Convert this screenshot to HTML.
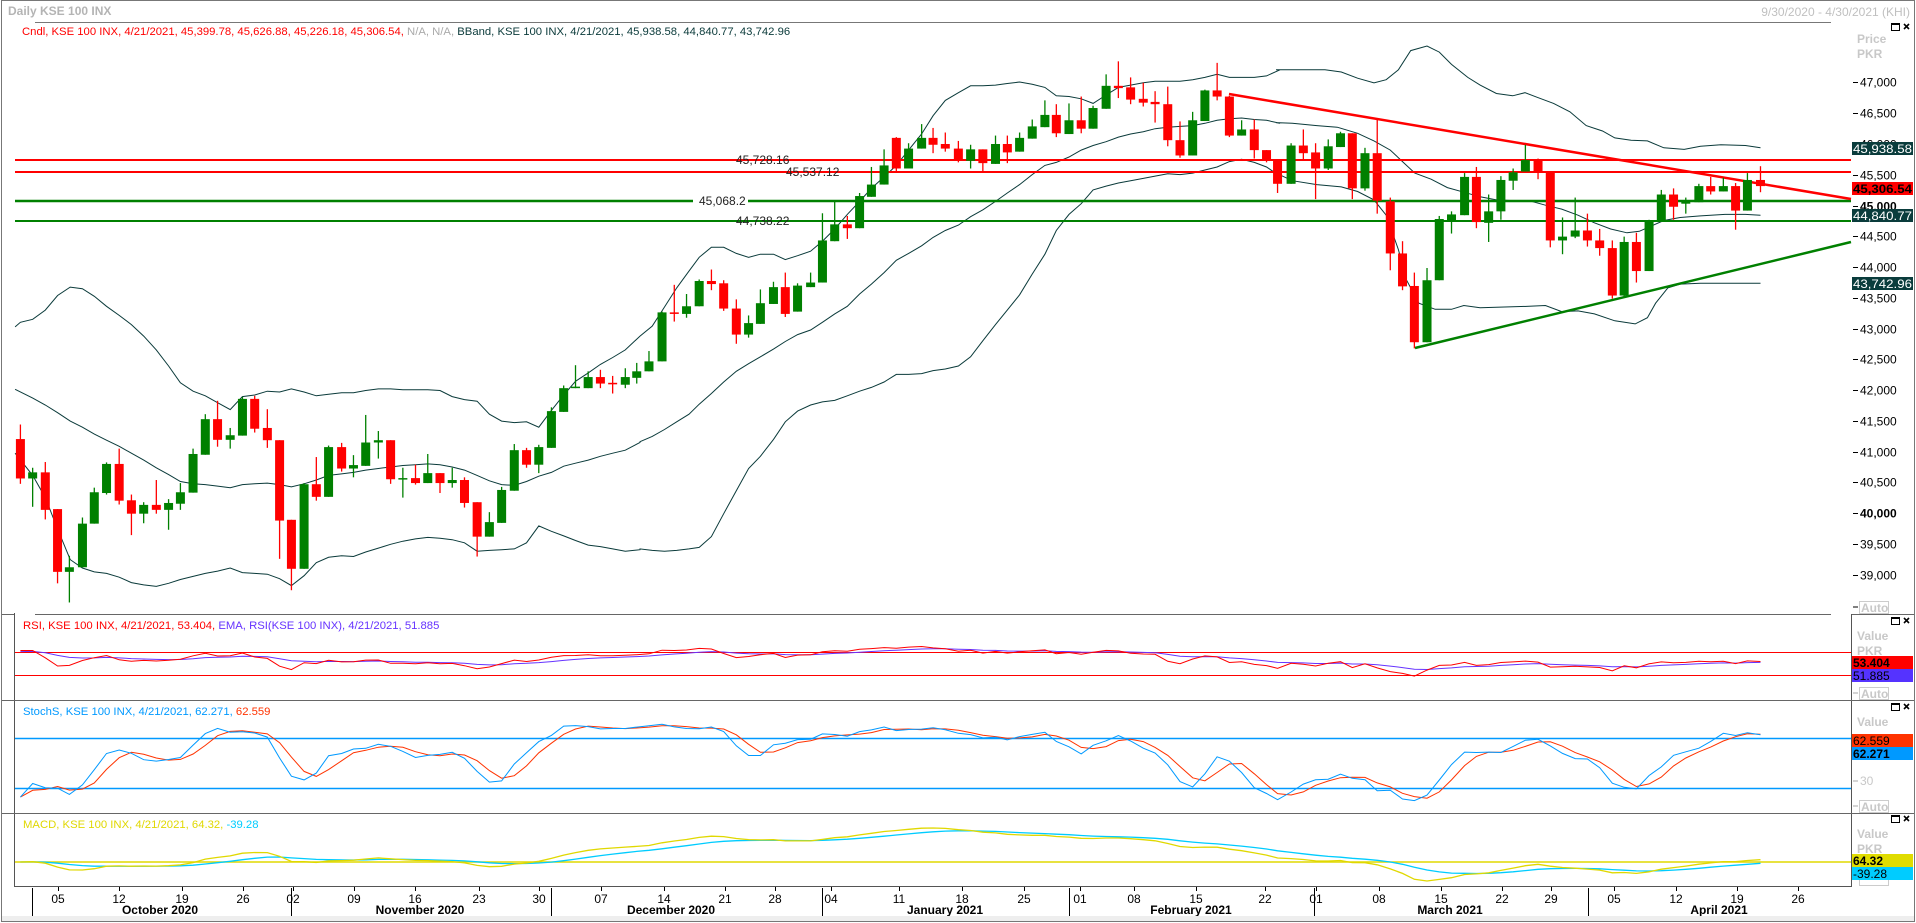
<!DOCTYPE html>
<html><head><meta charset="utf-8">
<style>
html,body{margin:0;padding:0;background:#fff;}
body{width:1916px;height:923px;overflow:hidden;position:relative;font-family:"Liberation Sans",Arial,sans-serif;}
svg{position:absolute;left:0;top:0;}
svg text{font-family:"Liberation Sans",Arial,sans-serif;font-size:12px;}
svg text.lg{font-size:11.3px;}
</style></head>
<body>
<svg id="s" width="1916" height="923" xmlns="http://www.w3.org/2000/svg">
<rect x="1.5" y="0.5" width="1913" height="921" fill="none" stroke="#777" stroke-width="1"/>
<line x1="35" y1="22.5" x2="1831" y2="22.5" stroke="#777"/>
<text x="8" y="15" fill="#b4b4b4" font-weight="bold">Daily KSE 100 INX</text>
<text x="1910" y="16" fill="#c0c0c0" text-anchor="end">9/30/2020 - 4/30/2021 (KHI)</text>
<text class="lg" x="22" y="35" fill="#ff0000">Cndl, KSE 100 INX, 4/21/2021, 45,399.78, 45,626.88, 45,226.18, 45,306.54, <tspan fill="#aaaaaa">N/A, N/A,</tspan> <tspan fill="#0a3a3a">BBand, KSE 100 INX, 4/21/2021, 45,938.58, 44,840.77, 43,742.96</tspan></text>
<g id="bands" fill="none" stroke="#0a3a3a" stroke-width="1"></g>
<g id="hlines">
<line x1="15" y1="160" x2="1851" y2="160" stroke="#ff0000" stroke-width="2"/>
<line x1="15" y1="172" x2="1851" y2="172" stroke="#ff0000" stroke-width="2"/>
<line x1="15" y1="201" x2="1851" y2="201" stroke="#008000" stroke-width="2.5"/>
<line x1="15" y1="221" x2="1851" y2="221" stroke="#008000" stroke-width="2"/>
<line x1="1229" y1="94" x2="1851" y2="199" stroke="#ff0000" stroke-width="2.5"/>
<line x1="1415" y1="348" x2="1851" y2="242" stroke="#008000" stroke-width="2.5"/>
</g>
<rect x="693" y="195" width="55" height="12" fill="#fff"/>
<g id="candles"></g>
<text x="736" y="164" fill="#222">45,728.16</text>
<text x="786" y="176" fill="#222">45,537.12</text>
<text x="699" y="205" fill="#222">45,068.2</text>
<text x="736" y="225" fill="#222">44,738.22</text>

<text x="1857" y="43" fill="#c8c8c8" font-weight="bold">Price</text>
<text x="1857" y="58" fill="#c8c8c8" font-weight="bold">PKR</text>
<g id="yaxis"></g>
<rect x="1852" y="142" width="61" height="13" fill="#0a3c3c"/>
<text x="1853" y="153" fill="#fff" font-size="13" textLength="59" lengthAdjust="spacingAndGlyphs">45,938.58</text>
<rect x="1852" y="182" width="61" height="13" fill="#ff0000"/>
<text x="1853" y="193" fill="#000" font-weight="bold" font-size="13" textLength="59" lengthAdjust="spacingAndGlyphs">45,306.54</text>
<rect x="1852" y="209" width="61" height="13" fill="#0a3c3c"/>
<text x="1853" y="220" fill="#fff" font-size="13" textLength="59" lengthAdjust="spacingAndGlyphs">44,840.77</text>
<rect x="1852" y="277" width="61" height="13" fill="#0a3c3c"/>
<text x="1853" y="288" fill="#fff" font-size="13" textLength="59" lengthAdjust="spacingAndGlyphs">43,742.96</text>
<line x1="1853" y1="607" x2="1858" y2="607" stroke="#000"/>
<rect x="1859.5" y="601.5" width="29" height="12" fill="none" stroke="#ccc"/>
<text x="1861" y="612" fill="#c8c8c8" font-weight="bold">Auto</text>

<line x1="35" y1="614.5" x2="1831" y2="614.5" stroke="#666"/>
<line x1="1851" y1="614.5" x2="1914" y2="614.5" stroke="#666"/>
<line x1="2" y1="614.5" x2="14" y2="614.5" stroke="#666"/>
<line x1="14.5" y1="613" x2="14.5" y2="886" stroke="#555"/>
<line x1="1851.5" y1="614" x2="1851.5" y2="886" stroke="#555"/>
<line x1="2" y1="700.5" x2="1914" y2="700.5" stroke="#666"/>
<line x1="2" y1="813.5" x2="1914" y2="813.5" stroke="#666"/>
<line x1="14" y1="886.5" x2="1852" y2="886.5" stroke="#555"/>

<text class="lg" x="23" y="629" fill="#ff0000">RSI, KSE 100 INX, 4/21/2021, 53.404, <tspan fill="#6633ff">EMA, RSI(KSE 100 INX), 4/21/2021, 51.885</tspan></text>
<line x1="15" y1="652.5" x2="1851" y2="652.5" stroke="#ff0000" stroke-width="1"/>
<line x1="15" y1="675.5" x2="1851" y2="675.5" stroke="#ff0000" stroke-width="1"/>
<g id="rsi" fill="none" stroke-width="1"></g>
<text x="1857" y="640" fill="#c8c8c8" font-weight="bold">Value</text>
<text x="1857" y="655" fill="#c8c8c8" font-weight="bold">PKR</text>
<rect x="1852" y="656" width="61" height="13" fill="#ff0000"/>
<text x="1853" y="667" fill="#000" font-weight="bold" font-size="13">53.404</text>
<rect x="1852" y="669" width="61" height="13" fill="#5533ff"/>
<text x="1853" y="680" fill="#000" font-size="13">51.885</text>
<line x1="1853" y1="693" x2="1858" y2="693" stroke="#aaa"/>
<rect x="1859.5" y="687.5" width="29" height="12" fill="none" stroke="#ccc"/>
<text x="1861" y="698" fill="#c8c8c8" font-weight="bold">Auto</text>

<text class="lg" x="23" y="715" fill="#0099ff">StochS, KSE 100 INX, 4/21/2021, 62.271, <tspan fill="#ff3300">62.559</tspan></text>
<line x1="15" y1="738.5" x2="1851" y2="738.5" stroke="#0099ff" stroke-width="1.5"/>
<line x1="15" y1="788.5" x2="1851" y2="788.5" stroke="#0099ff" stroke-width="1.5"/>
<g id="stoch" fill="none" stroke-width="1"></g>
<text x="1857" y="726" fill="#c8c8c8" font-weight="bold">Value</text>
<rect x="1852" y="734" width="61" height="13" fill="#ff3300"/>
<text x="1853" y="745" fill="#000" font-size="13">62.559</text>
<rect x="1852" y="747" width="61" height="13" fill="#0099ff"/>
<text x="1853" y="758" fill="#000" font-weight="bold" font-size="13">62.271</text>
<line x1="1853" y1="781" x2="1858" y2="781" stroke="#aaa"/>
<text x="1860" y="785" fill="#c8c8c8">30</text>
<line x1="1853" y1="806" x2="1858" y2="806" stroke="#aaa"/>
<rect x="1859.5" y="800.5" width="29" height="12" fill="none" stroke="#ccc"/>
<text x="1861" y="811" fill="#c8c8c8" font-weight="bold">Auto</text>

<text class="lg" x="23" y="828" fill="#e0d800">MACD, KSE 100 INX, 4/21/2021, 64.32, <tspan fill="#00ccff">-39.28</tspan></text>
<line x1="15" y1="862" x2="1851" y2="862" stroke="#e0d800" stroke-width="1.5"/>
<g id="macd" fill="none" stroke-width="1.3"></g>
<text x="1857" y="838" fill="#c8c8c8" font-weight="bold">Value</text>
<text x="1857" y="853" fill="#c8c8c8" font-weight="bold">PKR</text>
<rect x="1859.5" y="873.5" width="29" height="12" fill="none" stroke="#ccc"/>
<rect x="1852" y="854" width="61" height="13" fill="#e0dc00"/>
<text x="1853" y="865" fill="#000" font-weight="bold" font-size="13">64.32</text>
<rect x="1852" y="867" width="61" height="13" fill="#00ccff"/>
<text x="1853" y="878" fill="#000" font-size="13">-39.28</text>

<g id="icons" fill="none" stroke="#000"></g>

<g id="xaxis"></g>
<text x="160" y="914" font-weight="bold" text-anchor="middle">October 2020</text>
<text x="420" y="914" font-weight="bold" text-anchor="middle">November 2020</text>
<text x="671" y="914" font-weight="bold" text-anchor="middle">December 2020</text>
<text x="945" y="914" font-weight="bold" text-anchor="middle">January 2021</text>
<text x="1191" y="914" font-weight="bold" text-anchor="middle">February 2021</text>
<text x="1450" y="914" font-weight="bold" text-anchor="middle">March 2021</text>
<text x="1719" y="914" font-weight="bold" text-anchor="middle">April 2021</text>
<rect x="2" y="916" width="1912" height="5" fill="#eeeeee"/>
</svg>
<script>
(function(){
var NS="http://www.w3.org/2000/svg";
function el(p,n,a,t){var e=document.createElementNS(NS,n);for(var k in a)e.setAttribute(k,a[k]);if(t!=null)e.textContent=t;p.appendChild(e);return e;}
var FX=2.45,FY=2.613;
var z8="50,r,1057,1095,1198,1212;80,g,1170,1182,1198,1272;111,r,1155,1182,1280,1305;141,r,1278,1278,1442,1472;170,g,1400,1430,1442,1522;202,g,1300,1316,1430,1430;231,g,1222,1234,1316,1316;261,g,1156,1160,1236,1240;292,r,1120,1160,1256,1266;322,r,1240,1255,1290,1346;352,g,1260,1267,1290,1315;383,r,1202,1267,1280,1290;413,g,1252,1262,1280,1332;442,g,1210,1234,1264,1280;473,g,1120,1134,1235,1235;503,g,1030,1043,1136,1136;533,r,995,1043,1097,1115;564,g,1066,1085,1097,1120;594,g,985,990,1086,1086;624,r,982,990,1068,1078;655,r,1017,1066,1098,1118;685,r,1098,1098,1308,1408;714,r,1306,1306,1434,1490;745,g,1210,1213,1434,1434;775,r,1142,1213,1246,1256;805,g,1112,1116,1246,1246;837,r,1105,1116,1172,1180;866,g,1137,1163,1172,1195;896,g,1032,1104,1165,1165;927,g,1074,1098,1104,1146;957,r,1098,1098,1200,1212;987,g,1170,1197,1200,1248;1018,r,1162,1197,1210,1214;1048,g,1134,1184,1210,1210;1078,r,1184,1184,1210,1236;1108,g,1170,1202,1210,1222;1138,r,1195,1202,1262,1274;1169,r,1260,1260,1350,1402;1199,g,1286,1312,1350,1350;1229,g,1220,1228,1314,1314;1260,g,1108,1124,1230,1230;1290,r,1118,1124,1162,1170;1320,g,1110,1116,1162,1184;1351,g,1012,1022,1118,1118;1381,g,955,962,1024,1024;1410,g,902,958,962,962;1441,g,918,933,962,962;1471,r,914,933,950,962;1501,r,930,948,952,976;1532,g,910,933,953,962;1560,g,896,918,935,950";
var z9="22,g,865,892,918,918;54,g,762,764,892,892;84,r,692,764,768,788;114,g,716,748,768,778;145,g,678,682,748,748;175,r,652,682,690,706;205,r,680,688,754,760;236,r,730,754,822,846;266,g,772,792,822,830;295,g,704,740,794,794;327,g,684,698,742,742;356,r,660,698,768,776;386,g,688,694,762,762;418,g,660,686,698,698;447,g,505,576,686,686;477,g,474,534,578,578;508,r,512,534,544,572;538,g,452,460,544,544;567,g,384,430,462,462;598,g,338,380,430,430;628,r,306,308,388,396;658,g,322,336,388,388;690,g,272,308,336,336;718,r,282,308,326,348;748,r,294,324,336,344;780,r,316,336,368,372;810,g,326,338,368,388;840,r,338,338,374,396;871,g,302,324,376,376;900,r,302,324,346,374;930,g,294,308,344,344;961,g,260,278,310,310;992,g,210,248,280,280;1020,r,220,248,296,306;1051,g,218,262,298,298;1081,r,200,262,284,296;1110,g,224,230,284,284;1142,g,142,172,232,232;1172,r,108,172,178,204;1202,r,150,176,208,220;1233,r,164,206,216,226;1262,r,186,214,220,268;1293,r,174,220,314,330;1323,r,265,314,354,360;1354,g,240,262,354,354;1384,g,182,184,264,264;1414,r,112,184,200,210;1444,r,198,200,302,306;1474,g,262,286,302,302;1505,r,260,286,340,362;1535,r,340,340,366,372;1562,r,364,364,428,452";
var z10="37,g,322,328,428,428;67,r,286,328,348,364;97,r,322,346,388,468;128,g,312,330,388,392;158,g,292,296,332,332;187,r,296,296,440,468;218,g,334,348,440,446;248,r,258,348,472,506;280,r,464,474,610,654;310,r,578,610,696,706;339,r,660,695,842,858;370,g,648,680,842,842;400,g,512,520,680,680;430,g,500,508,526,558;462,g,400,410,510,510;491,r,384,410,528,544;521,g,456,500,530,580;551,g,408,418,500,522;581,g,388,398,420,444;611,g,326,366,396,396;642,r,362,366,398,416;672,r,396,396,576,594;702,g,516,566,576,612;733,g,464,550,566,570;763,r,506,550,576,592;793,r,546,576,596,616;824,r,576,596,720,728;853,g,566,580,720,724;883,r,556,580,656,686;914,g,522,526,656,656;944,g,444,456,526,526;974,r,440,456,488,522;1004,g,464,474,480,506;1036,g,428,434,476,476;1065,r,410,434,448,456;1096,g,412,434,448,448;1126,r,426,434,498,548;1155,g,400,418,498,498;1187,r,382,418,434,450";
var C=[];
function parse(s,x0){s.split(";").forEach(function(q){var a=q.split(",");C.push({x:x0+(+a[0])/FX,c:a[1],wt:20+(+a[2])/FY,bt:20+(+a[3])/FY,bb:20+(+a[4])/FY,wb:20+(+a[5])/FY});});}
parse(z8,0);parse(z9,640);parse(z10,1276);
var g=document.getElementById("candles");
C.forEach(function(k){var col=k.c=="r"?"#ff0000":"#008000";
 el(g,"line",{x1:k.x,x2:k.x,y1:k.wt,y2:k.wb,stroke:col,"stroke-width":1.3});
 var h=Math.max(1.5,k.bb-k.bt);
 el(g,"rect",{x:k.x-4.5,y:k.bt,width:9,height:h,fill:col});});
function pl(s,x0){return s.split(";").map(function(q){var a=q.split(",");return (x0+(+a[0])/FX).toFixed(1)+","+(20+(+a[1])/FY).toFixed(1);}).join(" ");}
var bg=document.getElementById("bands");
var B=[
["37,802;50,790;80,782;111,758;141,720;172,698;202,702;231,722;261,748;292,772;322,796;352,826;383,862;413,904;442,948;473,970;503,982;533,1000;564,1018;594,984;624,980;655,970;685,972;714,964;745,972;775,982;805,978;837,974;866,974;896,968;927,964;957,964;987,966;1018,966;1048,966;1078,968;1108,984;1138,992;1169,996;1199,1030;1229,1048;1260,1052;1290,1050;1320,1064;1351,1020;1381,980;1410,944;1441,922;1471,900;1501,882;1532,862;1568,826",
"0,826;30,800;60,750;90,700;120,656;145,620;175,594;205,594;236,610;266,620;295,612;327,612;356,626;386,616;418,604;447,578;477,546;508,508;538,474;567,440;598,410;628,380;658,340;690,298;718,250;748,210;780,190;810,172;840,172;871,170;900,166;930,162;961,168;992,176;1020,198;1051,200;1081,206;1110,218;1142,196;1172,176;1202,170;1233,164;1262,160;1293,160;1323,160;1354,156;1384,150;1414,142;1444,150;1474,150;1505,150;1535,146;1568,130",
"0,130;60,130;120,130;160,136;200,152;240,164;270,156;300,130;330,80;370,68;400,84;430,116;470,150;500,170;540,192;580,198;610,190;640,202;680,218;720,240;760,276;800,290;830,308;870,314;910,316;950,334;1000,338;1040,330;1090,326;1150,328;1187,334"],
["37,965;80,988;111,1006;141,1026;172,1048;202,1064;231,1082;261,1098;292,1114;322,1132;352,1150;383,1170;413,1188;442,1206;473,1212;503,1214;533,1218;564,1222;594,1214;624,1212;655,1210;685,1214;714,1220;745,1212;775,1202;805,1190;837,1186;866,1182;896,1176;927,1172;957,1168;987,1164;1018,1162;1048,1160;1078,1162;1108,1168;1138,1176;1169,1190;1199,1204;1229,1214;1260,1216;1290,1206;1320,1192;1351,1182;1381,1166;1410,1158;1441,1150;1471,1140;1501,1132;1532,1124;1568,1104",
"0,1102;30,1088;60,1070;90,1050;120,1030;145,1004;175,976;205,946;236,918;266,898;295,880;327,860;356,840;386,822;418,810;447,790;477,768;508,748;538,716;567,690;598,660;628,628;658,610;690,590;718,568;748,550;780,536;810,514;840,496;871,474;900,452;930,430;961,404;992,380;1020,372;1051,358;1081,340;1110,328;1142,318;1172,306;1202,298;1233,292;1262,284;1293,280;1323,278;1354,276;1384,270;1414,262;1444,258;1474,256;1505,260;1535,262;1568,270",
"0,268;40,270;100,276;150,280;200,296;240,316;280,340;310,370;340,400;380,416;420,438;460,450;500,462;540,470;580,472;620,472;660,484;700,494;740,510;780,530;820,546;860,556;890,552;920,538;950,524;990,516;1040,512;1100,508;1150,508;1187,510"],
["37,1132;80,1190;111,1248;141,1330;172,1410;202,1432;231,1442;261,1446;292,1456;322,1470;352,1476;383,1480;413,1472;442,1462;473,1454;503,1446;533,1440;564,1432;594,1444;624,1446;655,1448;685,1460;714,1478;745,1452;775,1418;805,1404;837,1400;866,1402;896,1390;927,1380;957,1370;987,1362;1018,1356;1048,1352;1078,1354;1108,1358;1138,1366;1169,1388;1199,1386;1229,1384;1260,1382;1290,1366;1320,1322;1351,1336;1381,1348;1410,1360;1441,1372;1471,1376;1501,1382;1532,1388;1568,1384",
"0,1382;30,1386;60,1388;90,1386;120,1382;145,1378;175,1350;205,1290;236,1230;266,1172;295,1140;327,1096;356,1050;386,1022;418,1006;447,998;477,994;508,982;538,970;567,960;598,946;628,926;658,926;690,924;718,916;748,912;780,904;810,880;840,838;871,796;900,758;930,718;961,664;992,612;1020,550;1051,508;1081,480;1110,444;1142,434;1172,426;1202,420;1233,414;1262,408;1293,402;1323,404;1354,400;1384,392;1414,384;1444,370;1474,364;1505,372;1535,384;1568,408",
"0,400;40,420;100,430;160,436;200,448;240,470;270,510;300,600;320,680;350,740;390,756;430,756;460,746;500,752;560,750;620,748;660,746;700,762;740,760;780,768;830,786;880,794;910,778;930,740;960,700;990,690;1040,688;1100,688;1187,688"]];
B.forEach(function(b){el(bg,"polyline",{points:pl(b[0],0)+" "+pl(b[1],640)+" "+pl(b[2],1276)});});
var ya=document.getElementById("yaxis");
var labs=[["47,000",82],["46,500",113],["46,000",144],["45,500",175],["45,000",206,1],["44,500",236],["44,000",267],["43,500",298],["43,000",329],["42,500",359],["42,000",390],["41,500",421],["41,000",452],["40,500",482],["40,000",513,1],["39,500",544],["39,000",575]];
labs.forEach(function(l){el(ya,"line",{x1:1853,x2:1858,y1:l[1]+.5,y2:l[1]+.5,stroke:"#000"});
 var t=el(ya,"text",{x:1860,y:l[1]+4.5,fill:"#000"},l[0]);if(l[2])t.setAttribute("font-weight","bold");});
var P=C.map(function(k){var cy=k.c=="g"?k.bt:k.bb;function p(y){return 45500-(y-175)/61.6*1000;}return {c:p(cy),h:p(k.wt),l:p(k.wb),x:k.x};});
var n=P.length;
var rsi=[],ag=0,al=0;
for(var i=1;i<n;i++){var d=P[i].c-P[i-1].c,gn=Math.max(d,0),ls=Math.max(-d,0);
 if(i==1){ag=gn+60;al=ls+60;}else{ag=(ag*13+gn)/14;al=(al*13+ls)/14;}
 rsi[i]=100-100/(1+ag/al);}
rsi[0]=rsi[1];
var ema=[],a2=2/10;ema[0]=rsi[0]-2;for(i=1;i<n;i++)ema[i]=ema[i-1]+a2*(rsi[i]-ema[i-1]);
function ry(v){return 675-(v-30)*0.575;}
var rg=document.getElementById("rsi");
el(rg,"polyline",{points:P.map(function(p,i){return p.x.toFixed(1)+","+ry(ema[i]).toFixed(1);}).join(" "),stroke:"#6633ff"});
el(rg,"polyline",{points:P.map(function(p,i){return p.x.toFixed(1)+","+ry(rsi[i]).toFixed(1);}).join(" "),stroke:"#ff0000"});
var raw=[],K=[],D=[];
for(i=0;i<n;i++){var hh=-1e9,ll=1e9;for(var j=Math.max(0,i-13);j<=i;j++){hh=Math.max(hh,P[j].h);ll=Math.min(ll,P[j].l);}raw[i]=hh>ll?100*(P[i].c-ll)/(hh-ll):50;}
function sma(a,i,m){var s=0,c=0;for(var j=Math.max(0,i-m+1);j<=i;j++){s+=a[j];c++;}return s/c;}
for(i=0;i<n;i++)K[i]=sma(raw,i,3);for(i=0;i<n;i++)D[i]=sma(K,i,3);
function sy(v){return 788-(v-20)*0.833;}
var sg=document.getElementById("stoch");
el(sg,"polyline",{points:P.map(function(p,i){return p.x.toFixed(1)+","+sy(D[i]).toFixed(1);}).join(" "),stroke:"#ff3300"});
el(sg,"polyline",{points:P.map(function(p,i){return p.x.toFixed(1)+","+sy(K[i]).toFixed(1);}).join(" "),stroke:"#0099ff"});
var e12=P[0].c,e26=P[0].c,M=[],S=[];
for(i=0;i<n;i++){e12+=2/13*(P[i].c-e12);e26+=2/27*(P[i].c-e26);M[i]=e12-e26;S[i]=i?S[i-1]+0.2*(M[i]-S[i-1]):M[i];}
var mx=0;for(i=0;i<n;i++)mx=Math.max(mx,Math.abs(M[i]),Math.abs(S[i]));
var sc=34/mx;
var mg=document.getElementById("macd");
el(mg,"polyline",{points:P.map(function(p,i){return p.x.toFixed(1)+","+(862-S[i]*sc).toFixed(1);}).join(" "),stroke:"#00ccff"});
el(mg,"polyline",{points:P.map(function(p,i){return p.x.toFixed(1)+","+(862-M[i]*sc).toFixed(1);}).join(" "),stroke:"#e0d800"});
var ic=document.getElementById("icons");
[28,622,708,820].forEach(function(y){el(ic,"rect",{x:1891.5,y:y-4.5,width:8,height:7,"stroke-width":1});el(ic,"line",{x1:1891,x2:1900,y1:y-4,y2:y-4,"stroke-width":2});
 el(ic,"path",{d:"M1904 "+(y-4)+"l5 5M1909 "+(y-4)+"l-5 5","stroke-width":1.6});});
var xa=document.getElementById("xaxis");
var days=[["05",58],["12",119],["19",182],["26",243],["02",293],["09",354],["16",415],["23",479],["30",539],["07",601],["14",664],["21",725],["28",775],["04",831],["11",899],["18",962],["25",1024],["01",1080],["08",1134],["15",1196],["22",1265],["01",1316],["08",1379],["15",1441],["22",1502],["29",1551],["05",1614],["12",1676],["19",1737],["26",1798]];
days.forEach(function(d){el(xa,"line",{x1:d[1]+.5,x2:d[1]+.5,y1:887,y2:891,stroke:"#000"});el(xa,"text",{x:d[1],y:903,"text-anchor":"middle",fill:"#000"},d[0]);});
[32,291,551,822,1069,1314,1588].forEach(function(x){el(xa,"line",{x1:x+.5,x2:x+.5,y1:888,y2:916,stroke:"#000"});});
})();
</script>
</body></html>
